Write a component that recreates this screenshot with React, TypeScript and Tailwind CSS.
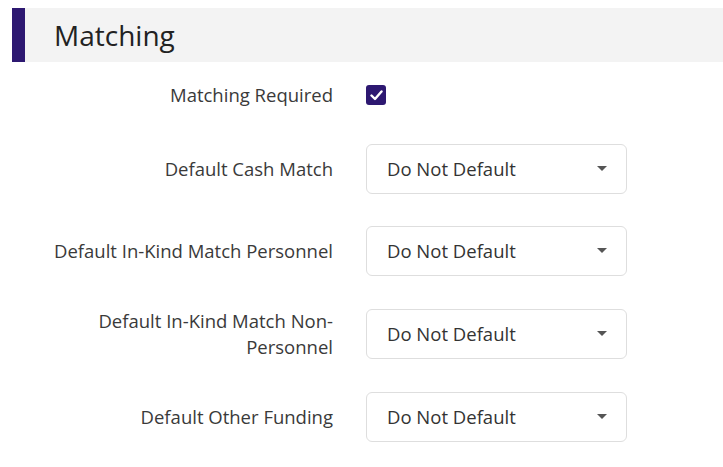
import { useState } from 'react';

const FIELDS = [
  'Default Cash Match',
  'Default In-Kind Match Personnel',
  'Default In-Kind Match Non-Personnel',
  'Default Other Funding',
];

const SelectBox = ({ value }: { value: string }) => (
  <div className="w-[261px] h-[50px] flex items-center justify-between pl-[20px] pr-[19px] border border-[#dedede] rounded-[6px] bg-white text-[#333] cursor-pointer">
    <span>{value}</span>
    <svg width="10" height="6" viewBox="0 0 10 6" className="text-[#555]">
      <path d="M0 0h10L5 5z" fill="currentColor" />
    </svg>
  </div>
);

export default function App() {
  const [required, setRequired] = useState(true);

  return (
    <div
      className="w-[723px] h-[467px] bg-white overflow-hidden pt-[8px] text-[18.5px]"
      style={{ fontFamily: '"Open Sans", "Noto Sans", sans-serif' }}
    >
      <div className="ml-[12px] flex h-[54px] bg-[#f3f3f3]">
        <div className="w-[13px] bg-[#2d1871]" />
        <h2 className="pl-[29px] flex items-center text-[28px] text-[#222] leading-none pb-[1px]">Matching</h2>
      </div>

      <div className="mt-[20px] flex items-center h-[26px]">
        <label className="w-[333px] text-right text-[#3a3a3a] pl-[50px] leading-[26px]">Matching Required</label>
        <button
          onClick={() => setRequired(!required)}
          className="ml-[33px] w-[20px] h-[20px] rounded-[3px] bg-[#2d1871] flex items-center justify-center"
          aria-label="Matching Required"
        >
          {required && (
            <svg width="13" height="11" viewBox="0 0 13 11">
              <path d="M1.5 5.5l3.5 3.5 6.5-7.5" stroke="white" strokeWidth="2.4" fill="none" strokeLinecap="round" strokeLinejoin="round" />
            </svg>
          )}
        </button>
      </div>

      <div className="mt-[36px] flex flex-col gap-[32px]">
        {FIELDS.map((f) => (
          <div key={f} className="flex items-center">
            <label className="w-[333px] pl-[48px] text-right text-[#3a3a3a] leading-[26px]">{f}</label>
            <div className="ml-[33px]">
              <SelectBox value="Do Not Default" />
            </div>
          </div>
        ))}
      </div>
    </div>
  );
}
